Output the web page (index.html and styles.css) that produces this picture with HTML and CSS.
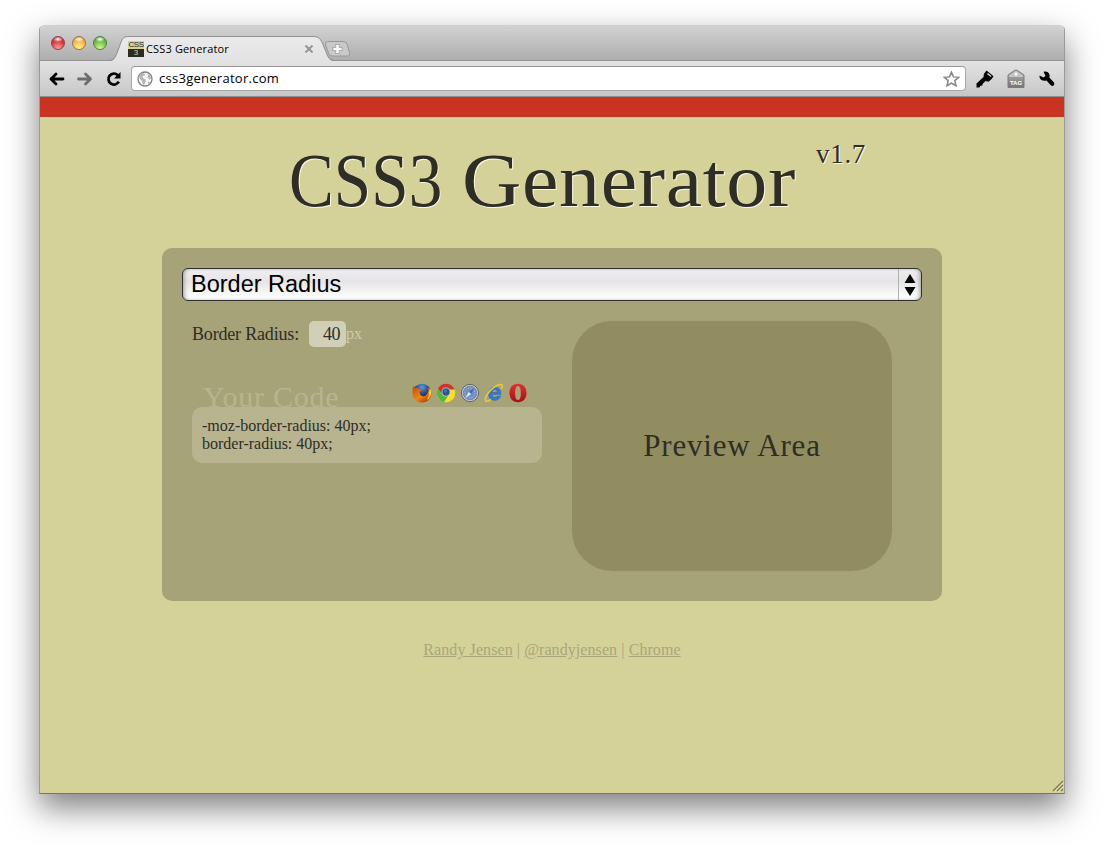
FILE: index.html
```html
<!DOCTYPE html>
<html lang="en">
<head>
<meta charset="utf-8">
<title>CSS3 Generator</title>
<link rel="stylesheet" href="styles.css">
</head>
<body>
<div class="window">
  <header class="tabstrip">
    <div class="lights">
      <span class="light red"></span><span class="light yellow"></span><span class="light green"></span>
    </div>
    <div class="tab">
      <svg class="tab-shape" width="228" height="26" viewBox="0 0 228 26">
        <defs><linearGradient id="tabfill" x1="0" y1="0" x2="0" y2="1"><stop offset="0" stop-color="#eaeaea"/><stop offset="1" stop-color="#e2e2e2"/></linearGradient></defs>
        <path d="M-5 25.500C1 25 2 23 4 18L8 7C10 2 11 1 16 1H200C205 1 207 3 209 7L213.500 18C215.500 23 217 25 222 25.500V26H-5Z" fill="url(#tabfill)"/>
        <path d="M-5 24.500C1 24 2 22 4 17L8 6C10 1.500 11 .5 16 .5H200C205 .5 207 2 209 6L213.500 17C215.500 22 217 24 222 24.500" fill="none" stroke="#929292"/>
      </svg>
      <span class="favicon"><b>CSS</b><i>3</i></span>
      <span class="tab-title">CSS3 Generator</span>
      <svg class="close" width="8" height="8" viewBox="0 0 8 8"><path d="M.5 .5L7.500 7.500M7.500 .5L.5 7.500" stroke="#969696" stroke-width="2"/></svg>
    </div>
    <svg class="newtab" width="28" height="18" viewBox="0 0 28 18">
      <path d="M3.500 1.500H19Q22 1.500 23 4L25.500 12.500Q26.500 16 24 16H9Q6 16 5 14L1.500 5Q1 1.500 3.500 1.500Z" fill="#c9c9c9" stroke="#989898"/>
      <path d="M13.500 4V14M8.500 9H18.500" stroke="#999" stroke-width="4"/><path d="M13.500 4.800V13.200M9.300 9H17.700" stroke="#fff" stroke-width="2.500"/>
    </svg>
  </header>
  <nav class="toolbar">
    <svg class="back" width="16" height="14" viewBox="0 0 16 14"><path d="M2 7H14M7 2L2 7L7 12" fill="none" stroke="#000" stroke-width="2.800" stroke-linecap="round" stroke-linejoin="round"/></svg>
    <svg class="forward" width="16" height="14" viewBox="0 0 16 14"><path d="M1.500 7H13.500M8.500 2L13.500 7L8.500 12" fill="none" stroke="#6d6d6d" stroke-width="2.800" stroke-linecap="round" stroke-linejoin="round"/></svg>
    <svg class="reload" width="16" height="16" viewBox="0 0 16 16"><path d="M11.800 4.200A5.500 5.500 0 1 0 12.800 10.700" fill="none" stroke="#000" stroke-width="2.700"/><path d="M14.500 1V7.500H8Z"/></svg>
    <div class="omnibox">
      <svg width="16" height="16" viewBox="0 0 16 16"><circle cx="8" cy="8" r="7" fill="#fbfbfb" stroke="#808080" stroke-width="1.300"/><path d="M2 5L4.500 2L7.500 2.500L8 4L5.500 5.500L6 7L8.500 8.500L8.700 10.500L7 14L5.500 13L5 10L2.500 7.500ZM10 2.500L13.500 5L14 8L12.500 8.500L10.500 6.500L11 4.500ZM11 10.500L13 11L11 13.500Z" fill="#b5b5b5"/></svg>
      <span>css3generator.com</span>
      <svg class="star" width="17" height="16" viewBox="0 0 17 16"><path d="M8.500 1.200L10.500 5.900L15.800 6.300L11.800 9.600L13 14.700L8.500 12L4 14.700L5.200 9.600L1.200 6.300L6.500 5.900Z" fill="#fff" stroke="#858585" stroke-width="1.500"/></svg>
    </div>
    <svg class="key" width="18" height="18" viewBox="0 0 18 18"><path d="M10.500 .5L17.500 6.300Q16 9.500 12.500 11.800L9.500 11L7.500 13L6.500 14V15.500L4.500 15.800L3.500 17.500H.5V13.500L7.500 7Q7.500 3.300 10.500 .5Z"/><path d="M11.500 3.500L15 6.500" stroke="#d6d6d6" stroke-width="1.500"/></svg>
    <svg class="tag" width="18" height="20" viewBox="0 0 18 20"><defs><linearGradient id="tagfill" x1="0" y1="0" x2="0" y2="1"><stop stop-color="#b5b5b5"/><stop offset="1" stop-color="#747474"/></linearGradient></defs><path d="M1 6L7.500 1.500Q9 .6 10.500 1.500L17 6V18.500H1Z" fill="url(#tagfill)" stroke="#7d7d7d"/><path d="M2 6.500L9 2L16 6.500V8H2Z" fill="#c5c5c5"/><circle cx="9" cy="5" r="1.500" fill="#fff"/><text x="9" y="16.200" text-anchor="middle" class="tag-text">TAG</text></svg>
    <svg class="wrench" width="16" height="16" viewBox="0 0 16 16"><path d="M.5 4.500L4.500 6.500L6.500 5L4.500 .7Q8.500 0 10 2.500Q11 4.500 10.300 6.500L15 11.500Q16 14 13.500 15Q12.500 15 11.500 14L7.500 9.500Q3 10.500 1.300 8Q.3 6.500 .5 4.500Z"/></svg>
  </nav>
  <main class="page">
    <h1><span class="name">CSS3</span> <span class="word">Generator</span><sup>v1.7</sup></h1>
    <section class="panel">
      <div class="select"><span>Border Radius</span><div class="arrows"><svg width="12" height="22" viewBox="0 0 12 22"><path d="M6 0L11.500 9H.5ZM6 22L11.500 13H.5Z"/></svg></div></div>
      <div class="columns">
        <div class="controls">
          <div class="field"><label>Border Radius:</label><span class="value">40</span><em>px</em></div>
          <div class="code-head">
            <h2>Your Code</h2>
            <div class="browsers">
              <svg width="20" height="20" viewBox="0 0 20 20"><defs><radialGradient id="ffb" cx=".5" cy=".2"><stop stop-color="#5b9bd6"/><stop offset="1" stop-color="#122a70"/></radialGradient><linearGradient id="ffo" x1="0" y1="0" x2=".8" y2="1"><stop stop-color="#c8470c"/><stop offset=".6" stop-color="#f08512"/><stop offset="1" stop-color="#b23205"/></linearGradient></defs><circle cx="10" cy="9.700" r="9" fill="url(#ffb)"/><path d="M1.500 3L3.500 5Q6 4.500 7 6L9.500 7L7.500 9L8.500 12Q12 15 15 11Q17.500 8 16 4.500Q19.500 6 19.500 11A9.500 9 0 0 1 .5 10Q.2 6 1.500 3Z" fill="url(#ffo)"/><path d="M18 5.500Q20 9 18.500 13Q17 16 14.500 17Q17.500 13 17 10Z" fill="#fad530"/></svg>
              <svg width="20" height="20" viewBox="0 0 20 20"><circle cx="10" cy="10" r="9.300" fill="#f6df25"/><path d="M1.900 5.500A9.300 9.300 0 0 1 18.700 6.500H10L6.500 12Z" fill="#c9352b"/><path d="M1.900 5.500A9.300 9.300 0 0 0 8 19L12 13L6.500 12Z" fill="#4fb840"/><circle cx="10" cy="9" r="4.500" fill="#cfcfcf"/><circle cx="10" cy="9" r="3.700" fill="#28559e"/><circle cx="9.500" cy="8" r="1.500" fill="#4773b8"/></svg>
              <svg width="20" height="20" viewBox="0 0 20 20"><circle cx="10" cy="10" r="8.600" fill="#cdd1d8" stroke="#5f626b"/><circle cx="10" cy="10" r="6.800" fill="#6e8fc4" stroke="#7885a1"/><circle cx="10" cy="10" r="5" fill="none" stroke="#bfd3ed" stroke-dasharray="1 1.600"/><path d="M14.500 5L11 11L8.800 9Z" fill="#3f66b0"/><path d="M5.500 15L8.800 9L11 11Z" fill="#f2f5fa"/></svg>
              <svg width="20" height="20" viewBox="0 0 20 20"><path d="M17 11.500H8Q8.500 14.300 11 14.300Q12.500 14.300 13.300 13H16.700Q14.800 17.500 10.500 17.500Q4.500 17 4.500 11Q5 4 11 4Q17.300 4.500 17 11.500ZM8.200 9.300H13.400Q13 6.500 10.800 6.500Q8.500 6.500 8.200 9.300Z" fill="#2f7bd2" fill-rule="evenodd" stroke="#174c9a" stroke-width=".3"/><path d="M17.500 6Q19.500 1 16 1.500Q10 3 5 9Q0 15.500 1.800 18Q3.500 19 7 16.500" fill="none" stroke="#e8c83c" stroke-width="1.600"/></svg>
              <svg width="20" height="20" viewBox="0 0 20 20"><defs><linearGradient id="op" x1="0" y1="0" x2="0" y2="1"><stop stop-color="#e22f32"/><stop offset="1" stop-color="#a90e16"/></linearGradient></defs><path d="M10 .7C15.400 .7 18.500 4.500 18.500 10S15.400 19.300 10 19.300S1.500 15.500 1.500 10S4.600 .7 10 .7ZM10 3C7.700 3 7.200 6 7.200 10S7.700 17 10 17S12.800 14 12.800 10S12.300 3 10 3Z" fill="url(#op)" fill-rule="evenodd"/></svg>
            </div>
          </div>
          <div class="code">-moz-border-radius: 40px;<br>border-radius: 40px;</div>
        </div>
        <div class="preview">Preview Area</div>
      </div>
    </section>
    <footer><a>Randy Jensen</a> | <a>@randyjensen</a> | <a>Chrome</a></footer>
    <svg class="grip" width="12" height="12" viewBox="0 0 12 12"><path d="M1 11L11 1M5 11L11 5M9 11L11 9" stroke="#77745a" stroke-width="1.200"/><path d="M2.500 11.500L11.500 2.500M6.500 11.500L11.500 6.500" stroke="#eeeccc" stroke-width=".8"/></svg>
  </main>
</div>
</body>
</html>
```
FILE: styles.css
```css
* { box-sizing: border-box; }
body { margin: 0; width: 1104px; height: 848px; overflow: hidden; background: #fff; font-family: "Liberation Serif", serif; }
svg { display: block; flex: none; }
.window {
  width: 1026px; height: 769px; margin: 25px 0 0 39px;
  border: 1px solid #999; border-top-color: #d0d0d0; border-bottom-color: #777665;
  border-radius: 5px 5px 0 0;
  box-shadow: 0 14px 32px rgba(0,0,0,.5);
  display: flex; flex-direction: column;
}
.tabstrip { height: 35px; flex: none; display: flex; background: linear-gradient(#d2d2d2, #aeaeae); border-radius: 4px 4px 0 0; border-bottom: 1px solid #929292; }
.lights { display: flex; gap: 7px; padding: 10px 0 0 11px; width: 73px; }
.light { width: 14px; height: 14px; flex: none; border-radius: 50%; border: 1px solid; }
.red { background: radial-gradient(ellipse 5px 3px at 50% 18%, #fff, transparent), radial-gradient(circle at 50% 95%, #ff9f9f, #db343b 60%, #a92830); border-color: #8c4248; }
.yellow { background: radial-gradient(ellipse 5px 3px at 50% 18%, #fff, transparent), radial-gradient(circle at 50% 95%, #fff68c, #f1b747 60%, #c5782c); border-color: #a87037; }
.green { background: radial-gradient(ellipse 5px 3px at 50% 18%, #fff, transparent), radial-gradient(circle at 50% 95%, #d1ff94, #6dba48 60%, #438b30); border-color: #4c813d; }
.tab { position: relative; z-index: 1; width: 225px; height: 26px; margin-top: 10px; padding: 3px 0 0 15px; display: flex; font: 11px "Open Sans", sans-serif; color: #000; }
.tab-shape { position: absolute; left: 0; top: 0; overflow: visible; }
.favicon { position: relative; width: 16px; height: 16px; margin-top: 2px; flex: none; background: #2b2b24; color: #dcd9a0; display: flex; flex-direction: column; align-items: center; overflow: hidden; }
.favicon b { width: 16px; height: 8px; font: 8px/8px "Liberation Sans", sans-serif; letter-spacing: -.4px; background: #d5d299; color: #222; text-align: center; }
.favicon i { font: 8px/8px "Liberation Sans", sans-serif; }
.tab-title { position: relative; margin: 2px 0 0 2px; width: 159px; line-height: 16px; white-space: nowrap; letter-spacing: .15px; }
.close { position: relative; margin-top: 6px; }
.newtab { margin: 14px 0 0 -14px; }
.toolbar { height: 36px; flex: none; display: flex; align-items: center; background: linear-gradient(#e3e3e3, #c7c7c7); border-bottom: 1px solid #909090; }
.back { margin-left: 9px; }
.forward { margin-left: 12px; }
.reload { margin-left: 13px; }
.omnibox { width: 835px; height: 25px; margin-left: 9px; padding: 0 5px; display: flex; align-items: center; background: #fff; border: 1px solid #a8a8a8; border-top-color: #969696; border-radius: 4px; font: 13px "Open Sans", sans-serif; color: #000; }
.omnibox span { flex: 1; margin-left: 6px; padding-bottom: 1px; letter-spacing: .27px; }
.key { margin-left: 10px; }
.tag { margin-left: 13px; }
.tag-text { font: bold 6px "Liberation Sans", sans-serif; fill: #fff; }
.wrench { margin-left: 14px; }
.page { position: relative; flex: 1; border-top: 20px solid #ca3322; background: #d5d299; color: #2e2d26; display: flex; flex-direction: column; align-items: center; }
h1 { width: 526px; height: 131px; margin: 0; display: flex; align-items: flex-start; font-size: 76px; line-height: 127px; font-weight: 400; text-shadow: 1px 1px #faf8e5; white-space: nowrap; }
.name { flex: none; width: 173px; transform: scaleX(.885); transform-origin: left; }
.word { flex: none; width: 335px; letter-spacing: .6px; transform: scaleX(1.08); transform-origin: left; }
sup { flex: none; margin: 21px 0 0 19px; font-size: 27px; line-height: 32px; letter-spacing: .7px; }
.panel { width: 780px; height: 353px; padding: 20px; background: #a7a378; border-radius: 10px; }
.select { width: 740px; height: 33px; display: flex; justify-content: space-between; border: 1px solid #303030; border-radius: 6px; background: linear-gradient(#f0eff0, #e6e4e6 40%, #f8f8f8 80%, #fff); box-shadow: inset 3px 0 4px -2px #999, inset -3px 0 4px -2px #999; font: 23.5px/31px "Liberation Sans", sans-serif; color: #000; padding-left: 8px; }
.arrows { width: 23px; padding: 5px 0 0 5px; border-left: 1px solid #b2b2b2; }
.columns { display: flex; padding: 20px 0 0 10px; gap: 30px; }
.controls { width: 350px; }
.field { display: flex; height: 26px; font-size: 18px; line-height: 26px; }
.field label { width: 117px; letter-spacing: -.18px; white-space: nowrap; }
.value { width: 37px; height: 26px; padding-right: 6px; text-align: right; letter-spacing: -.5px; border-radius: 5px; background: #d1cfb7; }
.field em { font-style: normal; font-size: 16px; color: #ceccb1; }
.code-head { height: 60px; display: flex; justify-content: space-between; align-items: flex-start; padding: 0 14px 0 11px; }
h2 { margin: 33px 0 0; font-size: 30px; line-height: 34px; font-weight: 400; color: #b8b48f; letter-spacing: .75px; }
.browsers { display: flex; gap: 4px; margin-top: 36px; }
.code { height: 56px; padding: 10px; border-radius: 10px; background: #b8b48f; font-size: 16px; line-height: 18px; }
.preview { width: 320px; height: 250px; border-radius: 40px; background: #918d61; display: flex; align-items: center; justify-content: center; font-size: 31px; letter-spacing: .8px; }
footer { margin-top: 39px; font-size: 16px; line-height: 20px; color: #aaa67b; letter-spacing: .08px; white-space: nowrap; }
footer a { text-decoration: underline; }
.grip { position: absolute; right: 0; bottom: 1px; }
```
